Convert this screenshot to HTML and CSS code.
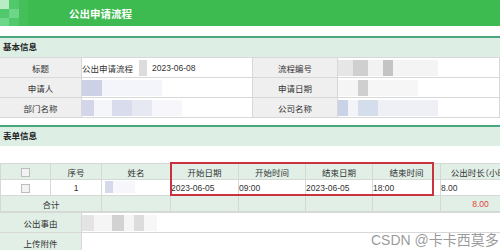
FILE: index.html
```html
<!DOCTYPE html>
<html lang="zh">
<head>
    <meta charset="UTF-8">
    <title>公出申请流程</title>
    <link rel="stylesheet" href="styles.css">
</head>
<body>
    <div class="page">
        <div class="top">
            <div class="logo">
                <i class="g1"></i><i class="g2"></i><i class="g3"></i>
                <i class="g2"></i><i class="g1"></i><i class="g3"></i>
                <i class="g1"></i><i class="g2"></i><i class="g3"></i>
            </div>
            <div class="title">公出申请流程</div>
        </div>

        <div class="sec first">基本信息</div>
        <div class="info">
            <div class="lab">标题</div>
            <div class="val">公出申请流程<span class="mz mz-a"></span>2023-06-08</div>
            <div class="lab">流程编号</div>
            <div class="val"><span class="mz mz-b"></span></div>
            <div class="lab">申请人</div>
            <div class="val"><span class="mz mz-c"></span></div>
            <div class="lab">申请日期</div>
            <div class="val"><span class="mz mz-d"></span></div>
            <div class="lab">部门名称</div>
            <div class="val"><span class="mz mz-e"></span></div>
            <div class="lab">公司名称</div>
            <div class="val"><span class="mz mz-f"></span></div>
        </div>

        <div class="sec second">表单信息</div>
        <div class="form">
            <table>
                <colgroup>
                    <col style="width:50px"><col style="width:51px"><col style="width:69px">
                    <col style="width:68px"><col style="width:67px"><col style="width:67px">
                    <col style="width:68px"><col style="width:80px">
                </colgroup>
                <tr class="head">
                    <td><span class="chk"></span></td>
                    <td>序号</td>
                    <td>姓名</td>
                    <td>开始日期</td>
                    <td>开始时间</td>
                    <td>结束日期</td>
                    <td>结束时间</td>
                    <td class="halt">公出时长（小时）</td>
                </tr>
                <tr class="row">
                    <td class="c"><span class="chk"></span></td>
                    <td class="c">1</td>
                    <td><span class="mz mz-g"></span></td>
                    <td>2023-06-05</td>
                    <td>09:00</td>
                    <td>2023-06-05</td>
                    <td>18:00</td>
                    <td>8.00</td>
                </tr>
                <tr class="sum">
                    <td colspan="2">合计</td>
                    <td></td><td></td><td></td><td></td><td></td>
                    <td class="red">8.00</td>
                </tr>
            </table>
            <div class="mark"></div>
        </div>
        <div class="extra">
            <div class="lab2">公出事由</div>
            <div class="val"><span class="mz mz-h"></span></div>
            <div class="lab2">上传附件</div>
            <div class="val"></div>
        </div>
        <div class="wm">CSDN @卡卡西莫多</div>
    </div>
</body>
</html>
```

FILE: styles.css
```css
*{
    margin:0;
    padding:0;
    box-sizing:border-box;
}
body{
    font-family:"Liberation Sans","Noto Sans CJK SC",sans-serif;
    font-size:8.5px;
    color:#333;
    background:#fff;
    overflow:hidden;
}
.page{
    position:relative;
    width:500px;
    height:250px;
    overflow:hidden;
}
.top{
    display:flex;
    align-items:center;
    height:26px;
    background:#3dba50;
}
.logo{
    display:grid;
    grid-template-columns:9px 10px 9px;
    grid-template-rows:9px 9px 8px;
    width:28px;
    height:26px;
}
.logo i{display:block;}
.g1{background:#6dd688;}
.g2{background:#52c86c;}
.g3{background:#44bf5a;}
.logo i:first-child{background:#b8ecc4;}
.title{
    padding-left:41px;
    color:#fff;
    font-size:10.5px;
    font-weight:bold;
}
.sec{
    height:21px;
    line-height:19px;
    padding-left:3px;
    border-top:2px solid #4aa67c;
    background:#ddeee5;
    font-weight:bold;
    font-size:8.5px;
    color:#222;
}
.first{margin-top:10px;}
.second{margin-top:7px;}
.info{
    display:grid;
    grid-template-columns:82px 171px 85px 1fr;
    grid-auto-rows:20px;
    border-bottom:1px solid #d8d8d8;
}
.info > div,.extra > div{
    border-top:1px solid #d8d8d8;
    border-right:1px solid #d8d8d8;
    display:flex;
    align-items:center;
}
.lab{
    background:#efefef;
    justify-content:center;
}
.lab2{
    background:#e1efe7;
    justify-content:center;
}
.val{background:#fff;}
.mz{
    display:inline-block;
    height:16px;
}
.mz-a{width:8px;margin:0 5px 0 6px;background:#dcdcdc;}
.mz-b{width:100px;background:linear-gradient(90deg,#e6e6e6 0 15px,#cfcfcf 15px 30px,#f2f2f2 30px 45px,#c4c4c4 45px 55px,#f4f4f4 55px);}
.mz-c{width:80px;background:linear-gradient(90deg,#ccd1e6 0 20px,#f4f5fa 20px);}
.mz-d{width:80px;background:linear-gradient(90deg,#f5f5f5 0 20px,#cfcfcf 20px 30px,#f6f6f6 30px);}
.mz-e{width:100px;background:linear-gradient(90deg,#d2d6e8 0 12px,#f5f6fa 12px 30px,#d8dcec 30px 50px,#e6e8f2 50px 70px,#f7f7fb 70px);}
.mz-f{width:100px;background:linear-gradient(90deg,#c9d2e6 0 10px,#f3f4f8 10px 20px,#d5dcec 20px 40px,#eef0f6 40px);}
.mz-g{width:30px;height:12px;margin-left:3px;background:linear-gradient(90deg,#d6d9ec 0 8px,#f7f7fb 8px);}
.mz-h{width:75px;background:linear-gradient(90deg,#e4e4e4 0 12px,#f5f5f5 12px 30px,#d2d2d2 30px 42px,#f5f5f5 42px 52px,#dcdcdc 52px 62px,#f7f7f7 62px);}
.form{
    position:relative;
    margin-top:17px;
    width:520px;
}
table{
    table-layout:fixed;
    width:520px;
    border-collapse:collapse;
}
td{
    height:16px;
    border:1px solid #d4d9d6;
    white-space:nowrap;
    overflow:hidden;
    padding:0;
}
.head td,.sum td{
    background:#e1efe7;
    text-align:center;
}
.halt{font-feature-settings:"halt";}
.row td{background:#fff;}
.c{text-align:center;}
.chk{
    display:inline-block;
    width:9px;
    height:9px;
    vertical-align:middle;
    border:1px solid #bdbdbd;
    background:#f3f3f3;
}
.red{color:#e0463c;}
.mark{
    position:absolute;
    left:170px;
    top:-1px;
    width:264px;
    height:34px;
    border:2px solid #c9323f;
}
.extra{
    display:grid;
    grid-template-columns:82px 1fr;
    grid-auto-rows:20px;
}
.extra > div{border-right:0;}
.extra .lab2{border-right:1px solid #d8d8d8;}
.wm{
    position:absolute;
    left:371px;
    top:229px;
    font-family:"Liberation Sans","Noto Sans CJK SC",sans-serif;
    font-size:14px;
    color:rgba(120,120,120,0.75);
}
```
